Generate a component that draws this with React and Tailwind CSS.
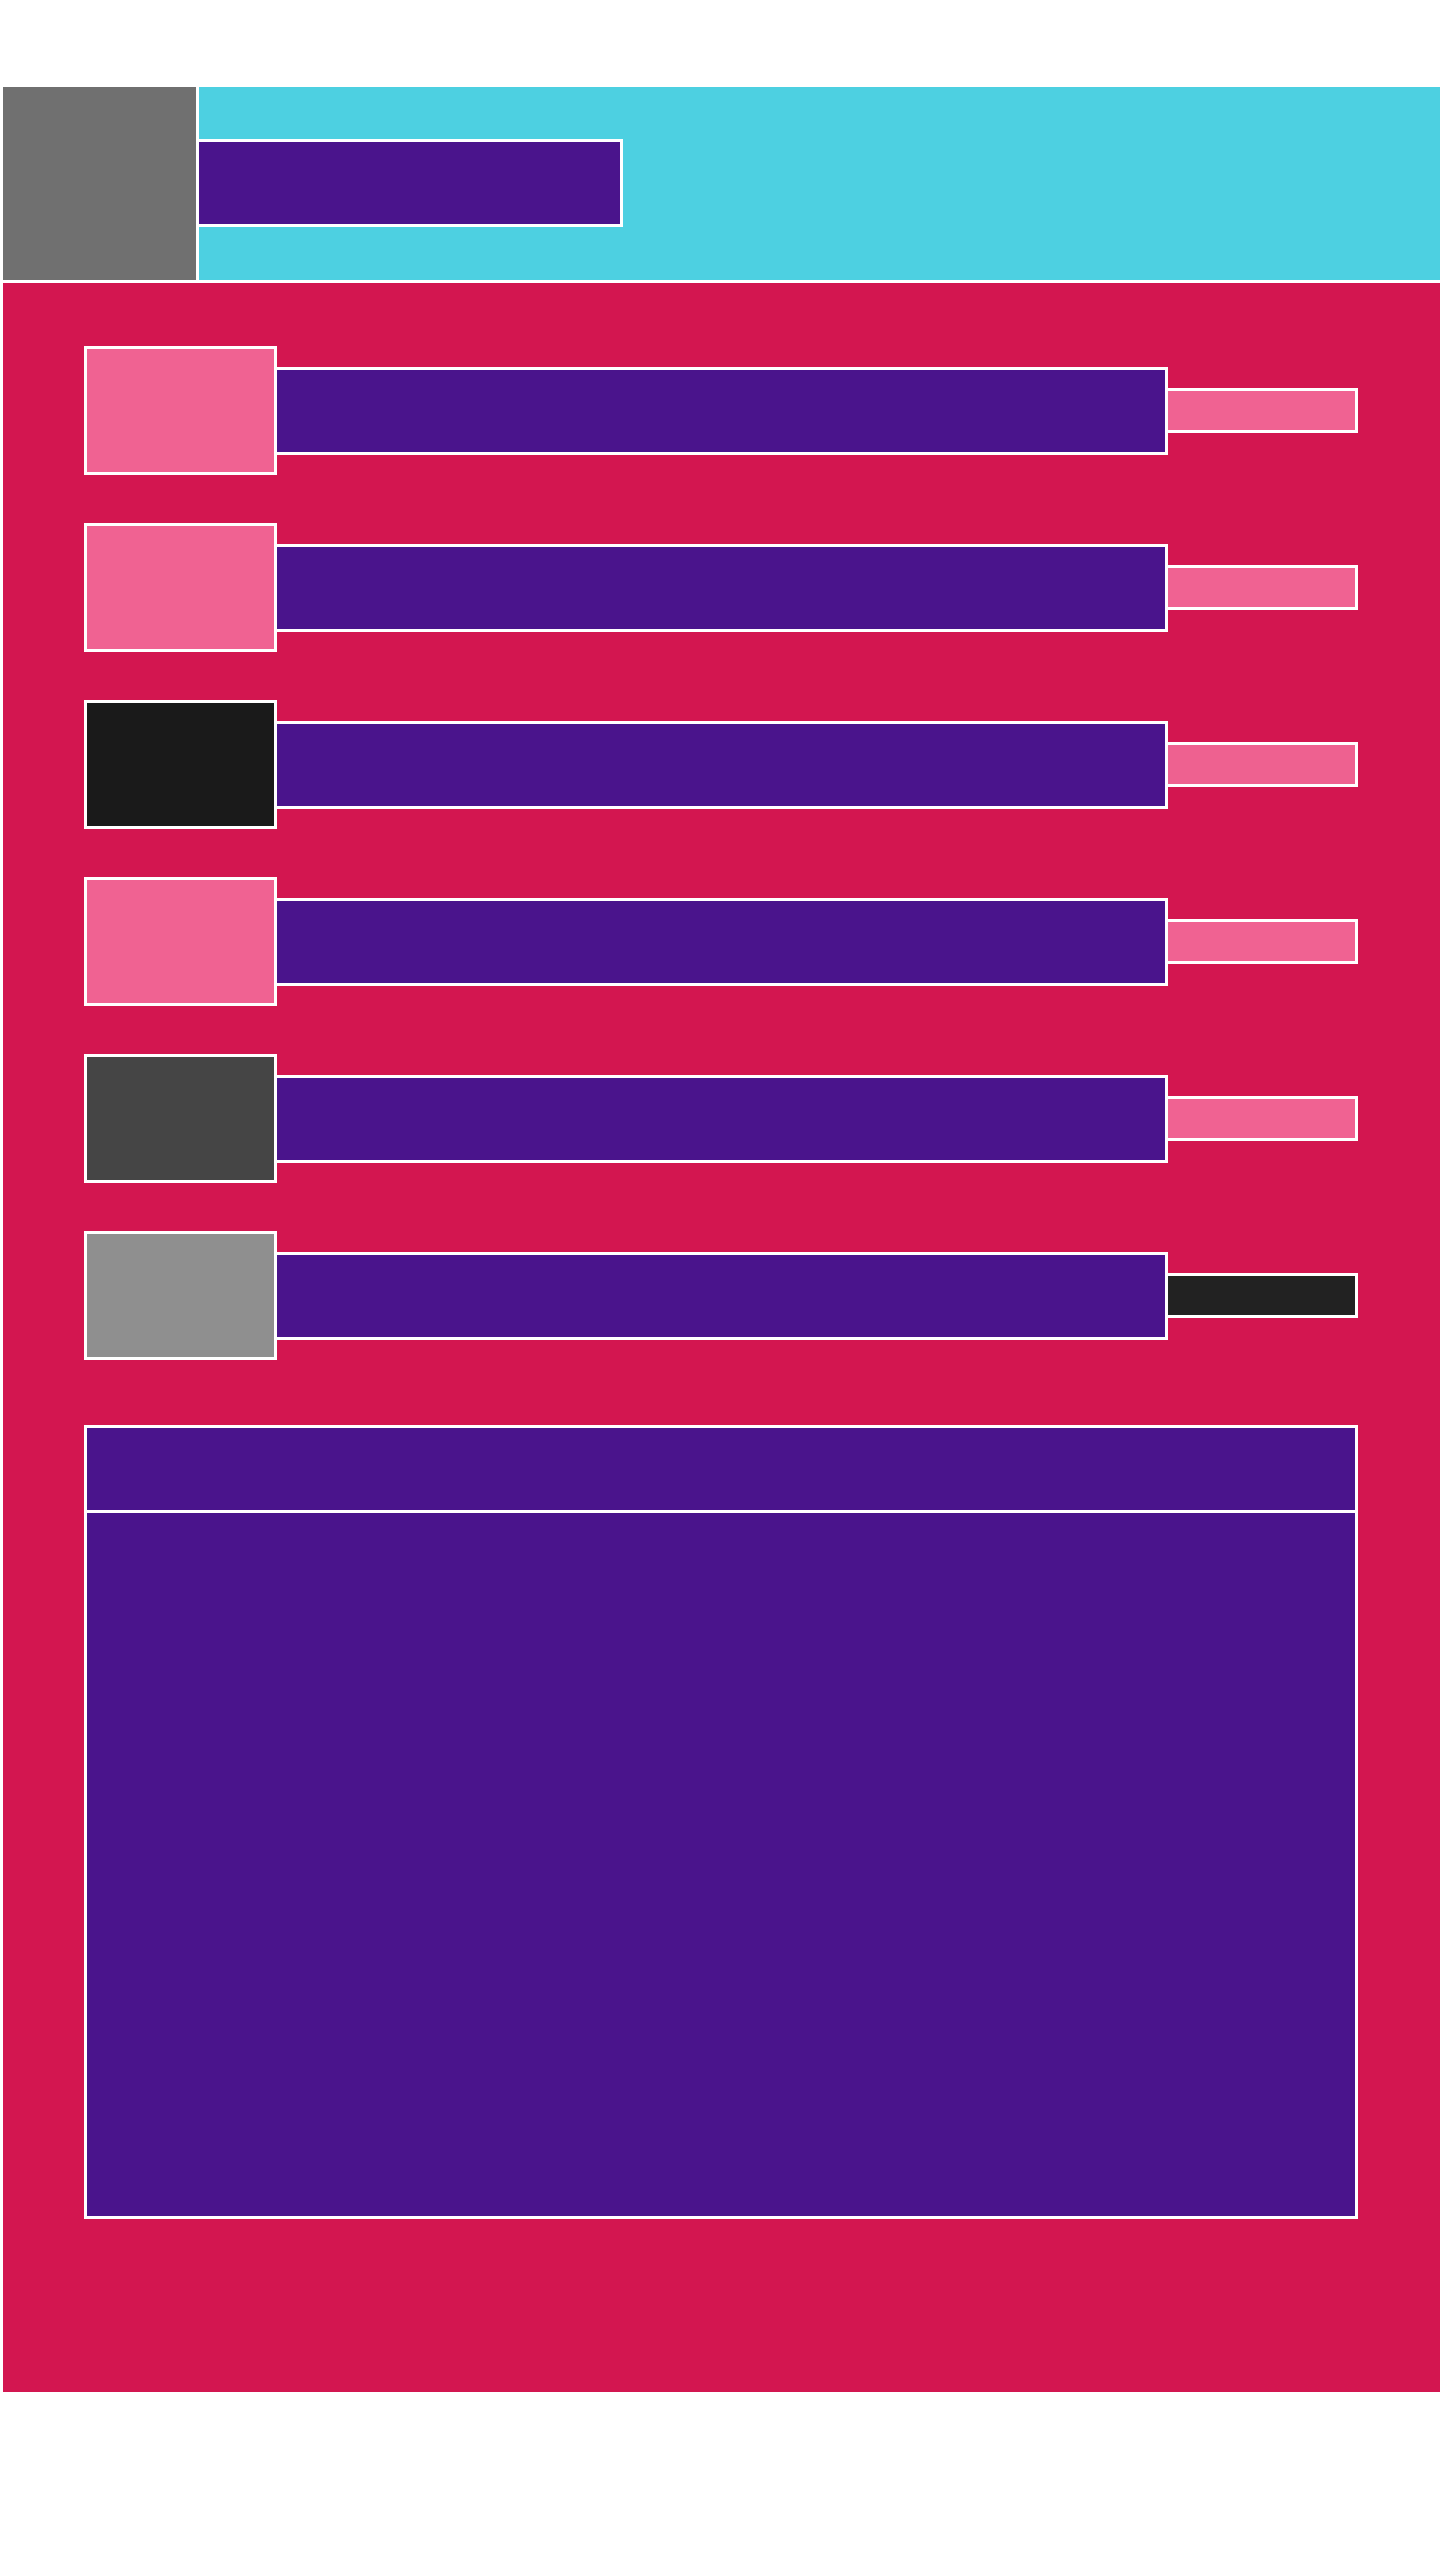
const rows = [
    { thumb: "bg-[#f06292]", tag: "bg-[#f06292]" },
    { thumb: "bg-[#f06292]", tag: "bg-[#f06292]" },
    { thumb: "bg-[#1a1a1a]", tag: "bg-[#ee6190]" },
    { thumb: "bg-[#f06292]", tag: "bg-[#f06292]" },
    { thumb: "bg-[#454545]", tag: "bg-[#f06292]" },
    { thumb: "bg-[#8f8f8f]", tag: "bg-[#222222]" },
];

const Row = ({ thumb, tag }) => {
    return (
        <div className="flex items-start h-[129px]">
            <div className={"w-[193px] h-[129px] border-[3px] border-white " + thumb}></div>
            <div className="mt-[21px] w-[891px] h-[88px] border-y-[3px] border-r-[3px] border-white bg-[#4a148c]"></div>
            <div className={"mt-[42px] w-[190px] h-[45px] border-y-[3px] border-r-[3px] border-white " + tag}></div>
        </div>
    )
}

const App = () => {
    return (
        <div className="min-h-[2560px] bg-white pt-[87px] pl-[3px]">

            {/* top bar */}
            <div className="flex h-[193px] gap-[3px]">
                <div className="w-[193px] h-full bg-[#707070]"></div>
                <div className="flex-1 h-full bg-[#4dd0e1] flex items-start">
                    <div className="mt-[52px] w-[424px] h-[88px] border-y-[3px] border-r-[3px] border-white bg-[#4a148c]"></div>
                </div>
            </div>

            {/* main panel */}
            <div className="mt-[3px] bg-[#d31650] pt-[63px] pl-[81px] pb-[173px]">
                <div className="flex flex-col gap-[48px]">
                    {
                        rows.map((r, i) => <Row key={i} thumb={r.thumb} tag={r.tag} />)
                    }
                </div>

                <div className="mt-[65px] w-[1274px] h-[794px] border-[3px] border-white bg-[#4a148c] flex flex-col">
                    <div className="h-[85px] border-b-[3px] border-white"></div>
                    <div className="flex-1"></div>
                </div>
            </div>

        </div>
    )
}

export default App;
